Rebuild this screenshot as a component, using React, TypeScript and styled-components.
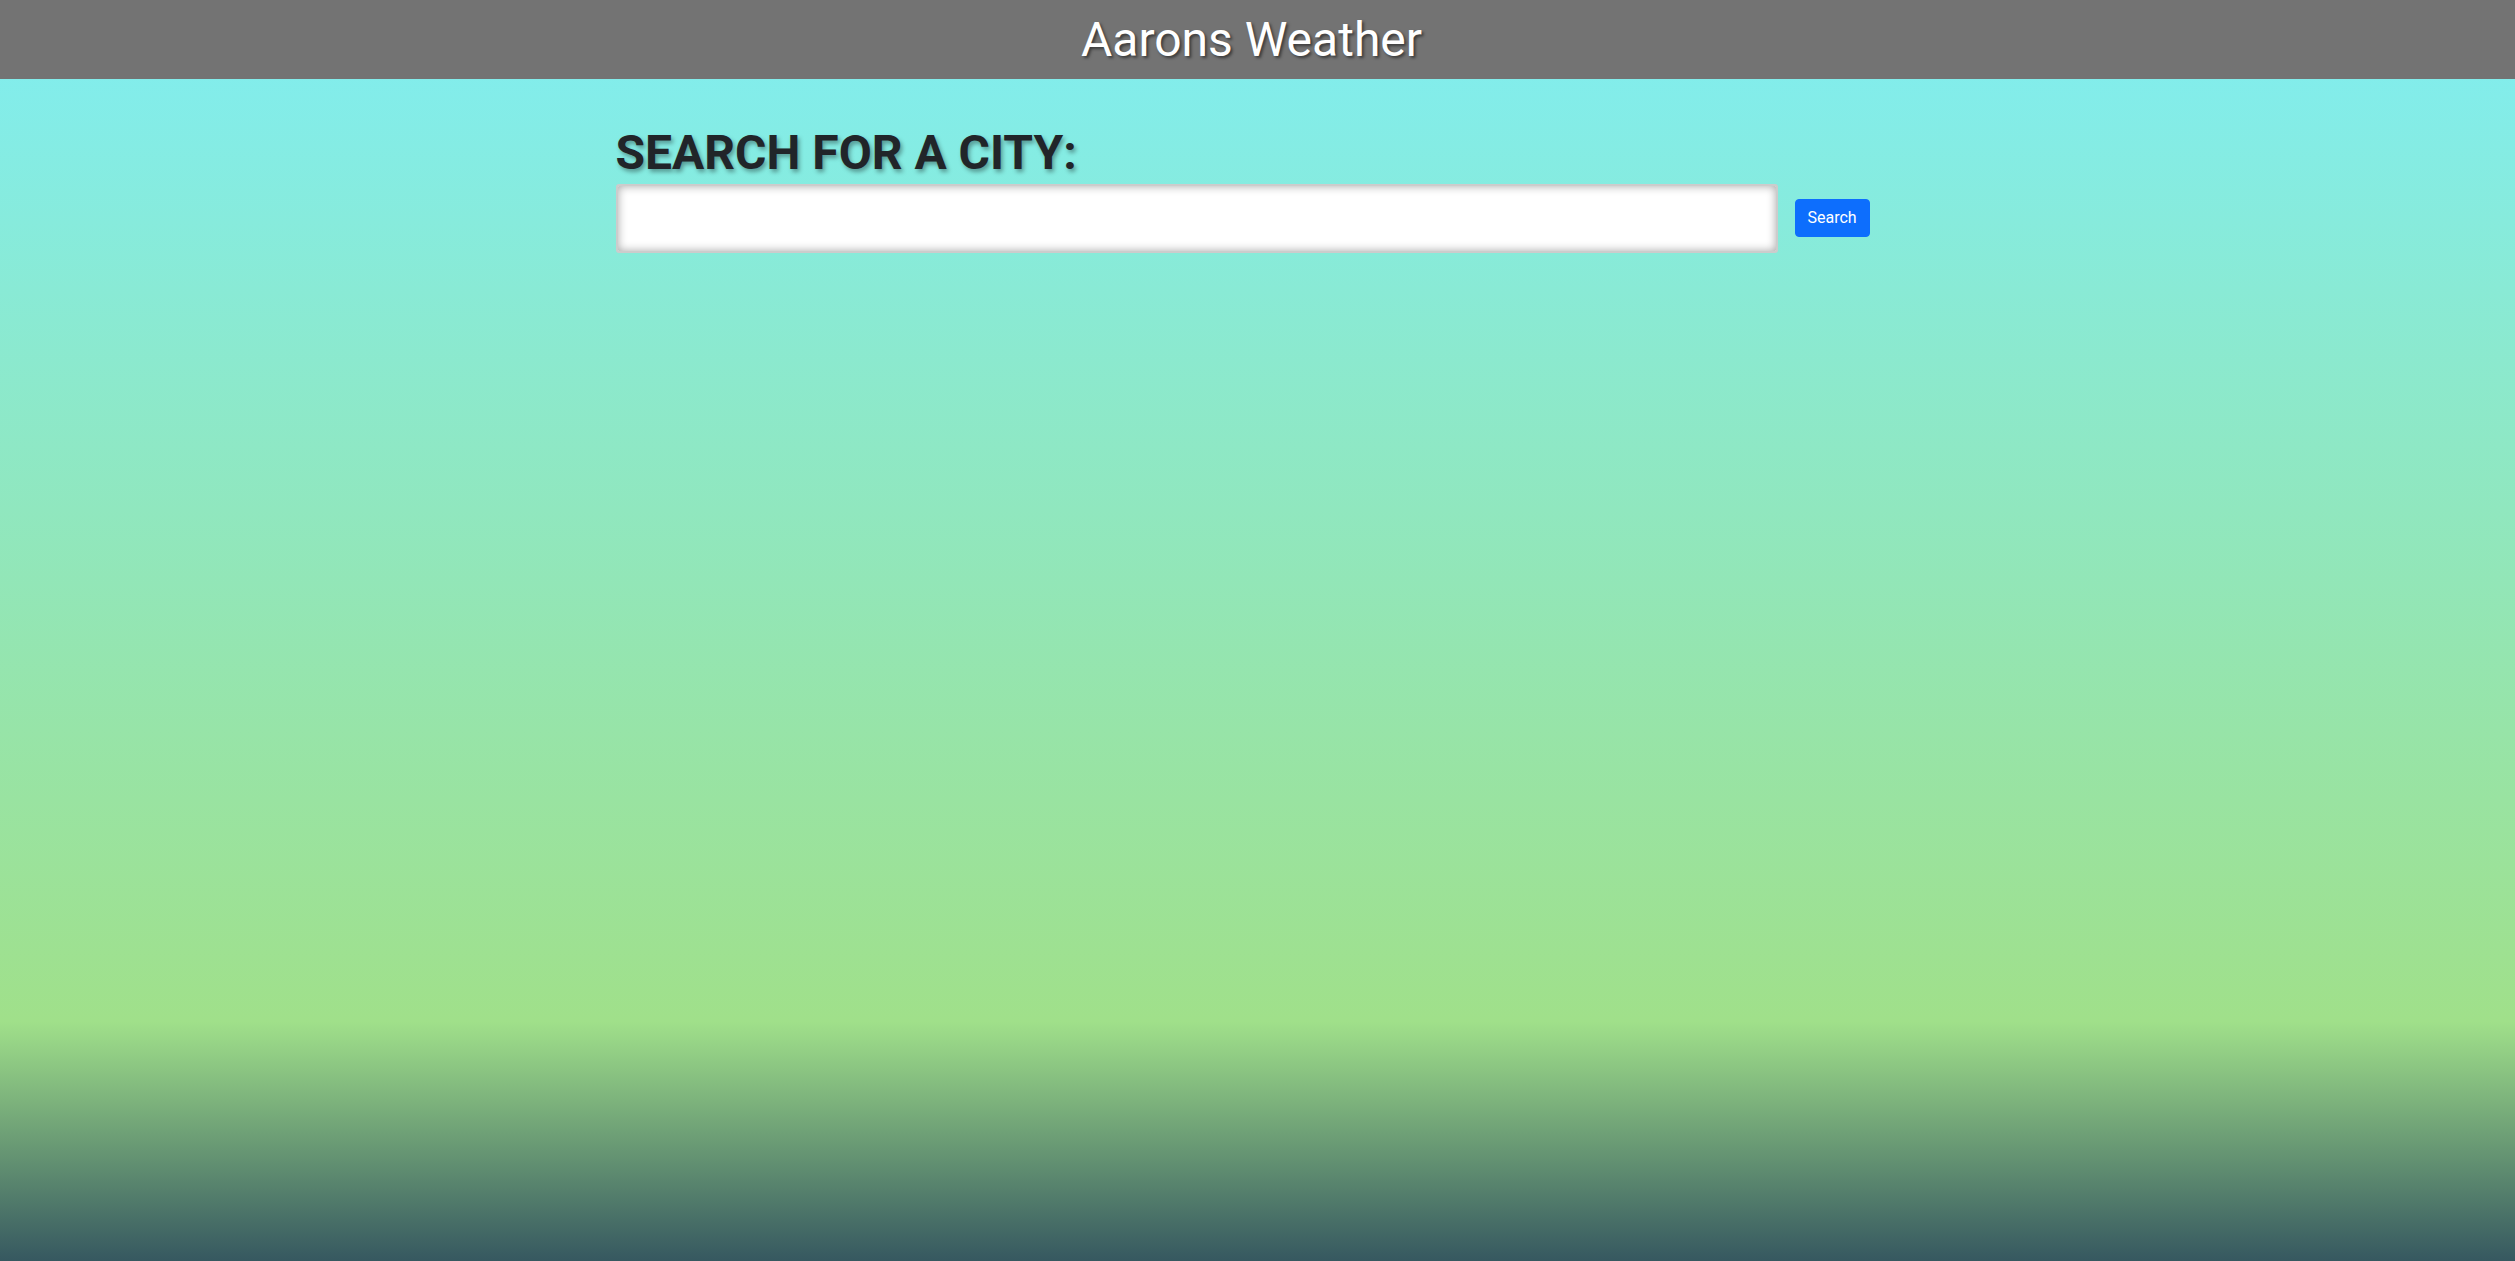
import * as React from 'react';
import styled, { createGlobalStyle } from 'styled-components';

const GlobalStyle = createGlobalStyle`
  html, body {
    margin: 0;
    padding: 0;
    height: 100%;
  }
  body {
    font-family: Roboto, "Liberation Sans", sans-serif;
    background: linear-gradient(to bottom, #80eef3 0%, #a0e08a 81%, #365860 100%) fixed;
    min-height: 1261px;
  }
`;

const Page = styled.div`
  min-height: 1261px;
  display: flex;
  flex-direction: column;
`;

const Header = styled.header`
  background-color: #737373;
  height: 79px;
  padding-right: 12px;
  display: flex;
  align-items: center;
  justify-content: center;
`;

const Title = styled.h1`
  margin: 0;
  color: white;
  font-weight: 400;
  font-size: 48px;
  line-height: 1;
  text-shadow: 2px 2px 3px rgba(0, 0, 0, 0.5);
`;

const Container = styled.main`
  width: 1320px;
  box-sizing: border-box;
  margin: 0 auto;
  padding: 45px 20px 0 18px;
`;

const Heading = styled.h2`
  margin: 0 0 2px;
  font-size: 48px;
  font-weight: 700;
  line-height: 1.2;
  color: #212529;
  text-shadow: 2px 3px 4px rgba(0, 0, 0, 0.35);
`;

const SearchRow = styled.form`
  display: flex;
  align-items: center;
  gap: 17px;
`;

const CityInput = styled.input`
  width: 1162px;
  height: 69px;
  box-sizing: border-box;
  border: 2px solid #cccccc;
  border-radius: 3px;
  background: white;
  box-shadow: inset 0 0 10px rgba(0, 0, 0, 0.35);
  font-size: 24px;
  padding: 0 12px;
  outline: none;
`;

const Button = styled.button`
  height: 38px;
  padding: 6px 12px;
  font-family: Roboto, "Liberation Sans", sans-serif;
  font-size: 16px;
  line-height: 1.5;
  color: white;
  background-color: #0d6efd;
  border: 1px solid #0d6efd;
  border-radius: 4px;
  cursor: pointer;
`;

export default function App() {
  return (
    <Page>
      <GlobalStyle />
      <Header>
        <Title>Aarons Weather</Title>
      </Header>
      <Container>
        <Heading>SEARCH FOR A CITY:</Heading>
        <SearchRow onSubmit={(e) => e.preventDefault()}>
          <CityInput type="text" />
          <Button type="submit">Search</Button>
        </SearchRow>
      </Container>
    </Page>
  );
}
